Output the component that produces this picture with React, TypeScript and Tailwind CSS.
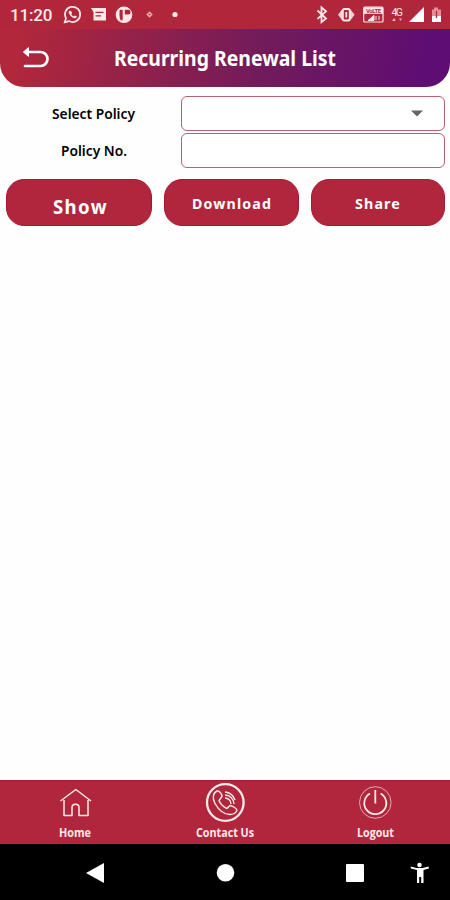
import React from "react";

type LabelProps = { text: string; width: number; className: string };

// Centred SVG text whose advance is fitted to a given width.
function Label({ text, width, className }: LabelProps) {
  return (
    <svg width={width} height="28" viewBox={`0 0 ${width} 28`} className="block shrink-0 overflow-visible fill-current">
      <text x="0" y="20" textLength={width} lengthAdjust="spacingAndGlyphs" className={className}>{text}</text>
    </svg>
  );
}

function StatusBar() {
  return (
    <div className="flex h-[29px] w-full items-center bg-[#b0273b] text-[#ffe9e9]">
      <span className="ml-[10px] w-[42px] whitespace-nowrap font-[Roboto,sans-serif] text-[17px] font-medium leading-[30px] tracking-[-0.2px]">11:20</span>
      <svg width="130" height="29" viewBox="52 0 130 29" fill="none" stroke="currentColor">
        <path d="M64.8 22.3l1.2-4.1a7.6 7.6 0 1 1 3 2.9z" strokeWidth="1.7" />
        <path d="M69.5 10.7c-1 .6-1 2-.2 3.4 1.2 2.2 3 3.8 5.2 4.2 1.2.1 2.3-.5 2.4-1.7l-2-1.1-1.1 1.1c-1.2-.6-2-1.4-2.6-2.5l.9-1-1-2.2z" fill="currentColor" stroke="none" />
        <path d="M91 8h15v12.5H93.5V12z" fill="currentColor" stroke="none" />
        <path d="M95.5 12.3h8M95.5 15.8h5.5" stroke="#b0273b" strokeWidth="1.2" />
        <circle cx="124" cy="14.8" r="8.3" fill="currentColor" stroke="none" />
        <path d="M119.8 9.8h2.9v10.4h-2.1c-1.2-2.5-1.5-7-.8-10.4zM124.8 9.8h3.4a2.4 2.4 0 0 1 0 4.8h-3.4z" fill="#b0273b" stroke="none" />
        <path d="M149.5 11.2l3.3 3.3-3.3 3.3-3.3-3.3z" fill="currentColor" stroke="none" opacity=".65" />
        <circle cx="149.5" cy="14.5" r=".8" fill="#b0273b" stroke="none" />
        <circle cx="175" cy="14.5" r="2.6" fill="currentColor" stroke="none" />
      </svg>
      <svg width="140" height="29" viewBox="310 0 140 29" fill="none" stroke="currentColor" className="ml-auto">
        <path d="M317.5 10.5l8.5 8-4.5 3.7V7.5l4.5 3.8-8.5 7.5" strokeWidth="1.8" />
        <path d="M338 14.8l4-5.3v10.6zM354.6 14.8l-4-5.3v10.6z" fill="currentColor" stroke="none" opacity=".85" />
        <rect x="342.7" y="9" width="7.2" height="11.5" rx="2" strokeWidth="2.1" />
        <path d="M346.3 12v5.5" strokeWidth="1.7" />
        <rect x="363.7" y="7.2" width="19.3" height="14.8" rx="1" strokeWidth="1.2" />
        <path d="M364 7.5h19v6.3h-19z" fill="currentColor" stroke="none" />
        <text x="366" y="12.8" textLength="15" className="fill-[#b0273b] stroke-none font-[Roboto,sans-serif] text-[6px] font-bold">VoLTE</text>
        <path d="M368 20.5l6-5v5zM376 16v4M379 16v4" fill="currentColor" />
        <text x="391.5" y="15.8" textLength="11.5" className="fill-current stroke-none font-[Roboto,sans-serif] text-[10.5px]">4G</text>
        <path d="M392 21l2-3 2 3zM399 18.5h3l-1.5 2.5z" fill="currentColor" stroke="none" opacity=".7" />
        <path d="M409 22h15V7z" fill="white" stroke="none" />
        <path d="M434 7.5h4v2h3V16h-9V9.5h2z" fill="#e78c97" stroke="none" />
        <path d="M432 16h9v6h-9z" fill="white" stroke="none" />
        <path d="M436.5 11v7" stroke="#b0273b" strokeWidth="1.3" />
      </svg>
    </div>
  );
}

function Header() {
  return (
    <header className="h-[58px]">
      <div className="flex h-full items-center rounded-b-[24px] bg-[linear-gradient(100deg,#b1273b_5%,#721b5b_58%,#5d0d73_95%)] text-white">
        <svg width="30" height="26" viewBox="0 0 30 26" fill="none" stroke="currentColor" strokeWidth="2.7" strokeLinecap="round" className="ml-[21px] mt-[1px]">
          <path d="M4 6h15.5a6.6 6.6 0 0 1 0 14H4" />
          <path d="M7.2 1.8L2.5 6l4.7 4.2z" fill="currentColor" strokeWidth="1" />
        </svg>
        <div className="ml-[63px] mt-[4px]"><Label text="Recurring Renewal List" width={222} className="font-['Noto_Sans',sans-serif] text-[21px] font-bold" /></div>
      </div>
    </header>
  );
}

export default function App() {
  return (
    <main className="flex h-[900px] w-[450px] flex-col overflow-hidden bg-[#fefefe]">
      <StatusBar />
      <Header />
      <section className="flex flex-col gap-[3px] pl-[6px] pr-[5px] pt-[9px] text-black">
        <div className="flex h-[34px] items-center">
          <div className="flex w-[175px] justify-center"><Label text="Select Policy" width={83} className="font-['Noto_Sans',sans-serif] text-[14px] font-semibold" /></div>
          <button aria-label="Select policy" className="flex h-[35px] flex-1 items-center justify-end rounded-[6px] border border-[#b76174] bg-white pr-[21px]">
            <svg width="12" height="7" viewBox="0 0 12 7"><path d="M0 .5h12L6 6.5z" fill="#656565" /></svg>
          </button>
        </div>
        <div className="flex h-[35px] items-center">
          <div className="flex w-[175px] justify-center pb-[2px]"><Label text="Policy No." width={66} className="font-['Noto_Sans',sans-serif] text-[14px] font-semibold" /></div>
          <input aria-label="Policy number" className="h-[35px] min-w-0 flex-1 rounded-[6px] border border-[#b76174] bg-white" />
        </div>
      </section>
      <section className="mt-[11px] flex h-[47px] shrink-0 gap-3 pl-[6px] pr-[5px] text-white">
        <button className="flex w-[146px] items-center justify-center rounded-[18px] border border-[#a91831] bg-[#b0273d] pl-[2px] pt-[10px]"><Label text="Show" width={55} className="font-['Noto_Sans',sans-serif] text-[20px] font-bold tracking-[1.5px]" /></button>
        <button className="flex w-[135px] items-center justify-center rounded-[18px] border border-[#a91831] bg-[#b0273d] pt-[1px]"><Label text="Download" width={80} className="font-['Noto_Sans',sans-serif] text-[15px] font-bold tracking-[1.2px]" /></button>
        <button className="flex w-[134px] items-center justify-center rounded-[18px] border border-[#a91831] bg-[#b0273d] pt-[1px]"><Label text="Share" width={46} className="font-['Noto_Sans',sans-serif] text-[15px] font-bold tracking-[1.2px]" /></button>
      </section>
      <div className="flex-1" />
      <nav className="grid h-[64px] shrink-0 grid-cols-3 border-t border-[#a91831] bg-[#b0273d] text-[#ffe9e9]">
        <button className="flex flex-col items-center">
          <svg width="34" height="36" viewBox="58 781 34 36" fill="none" stroke="currentColor" strokeWidth="1.5" strokeLinejoin="round" className="shrink-0">
            <path d="M60.5 801L75.8 789.5 91 801M64 800v15.5h8v-8c0-4.5 7-4.5 7 0v8h9V800" />
          </svg>
          <Label text="Home" width={32} className="font-['Open_Sans',sans-serif] text-[11.5px] font-bold" />
        </button>
        <button className="flex flex-col items-center">
          <svg width="40" height="36" viewBox="205 781 40 36" fill="none" stroke="currentColor" strokeWidth="1.4" className="shrink-0 overflow-visible">
            <circle cx="225.3" cy="802.5" r="18.3" strokeWidth="2.3" />
            <path d="M217 791c-4 2-5 7-2 12.500 4 7 9 11 15 11 4 0 6-2 7-4 0-2-5-5-7-5l-3 3c-4-2-7-5-8-8l3-4c0-2-2-6-5-5.500z" />
            <path d="M225 798a6 6 0 0 1 6 6M225 795a9 9 0 0 1 9 9M225 792a12 12 0 0 1 10 8" />
          </svg>
          <Label text="Contact Us" width={58} className="font-['Open_Sans',sans-serif] text-[11.5px] font-bold" />
        </button>
        <button className="flex flex-col items-center">
          <svg width="36" height="36" viewBox="357 781 36 36" fill="none" stroke="currentColor" className="shrink-0 overflow-visible">
            <circle cx="375.3" cy="802.5" r="15.8" strokeWidth="1" opacity=".65" />
            <path d="M370 793.500a11 11 0 1 0 10.600 0M375.300 790v13.500" strokeWidth="1.8" />
          </svg>
          <Label text="Logout" width={37} className="font-['Open_Sans',sans-serif] text-[11.5px] font-bold" />
        </button>
      </nav>
      <div className="h-14 shrink-0 bg-black">
        <svg width="450" height="56" viewBox="0 844 450 56" fill="white">
          <path d="M86 873l18-10v20z" /><circle cx="225.5" cy="872.8" r="8.8" /><rect x="346" y="864" width="18" height="18" rx="1" />
          <circle cx="419.5" cy="865" r="2.3" /><path d="M410.5 866.5l6 1.5h6l6-1.5.5 2-5.5 1.5v13h-2.3v-6h-2v6H417v-13l-6-1.5z" />
        </svg>
      </div>
    </main>
  );
}
